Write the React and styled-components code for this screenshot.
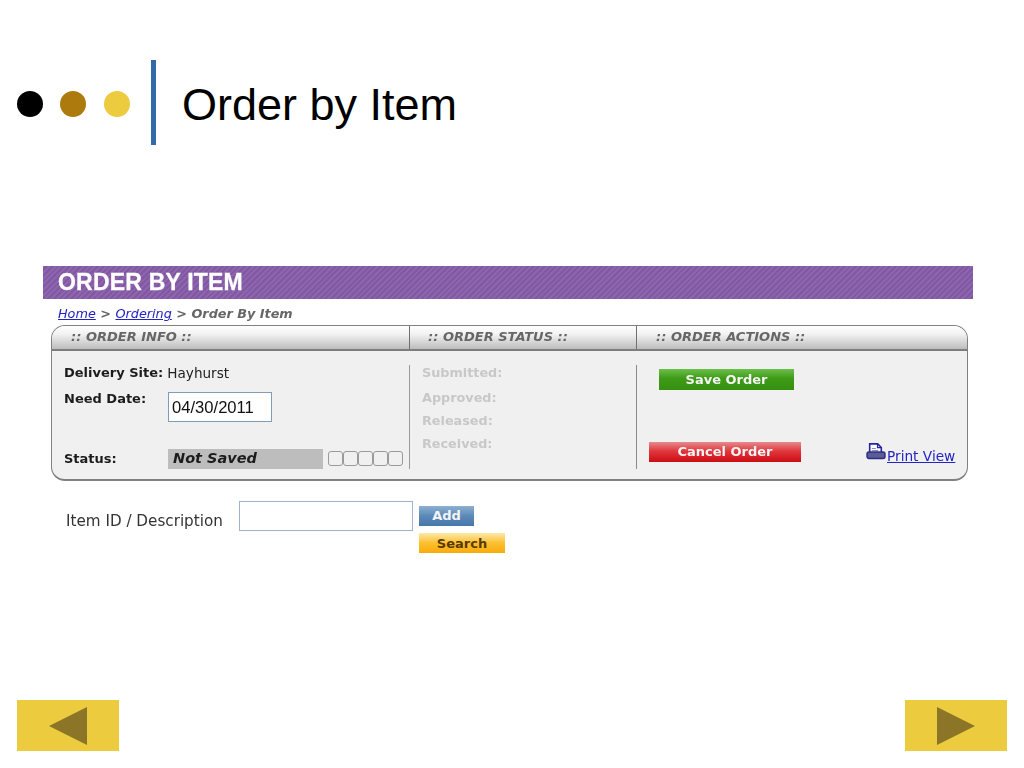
import React from "react";
import styled, { createGlobalStyle } from "styled-components";

const Global = createGlobalStyle`
  html, body { margin: 0; padding: 0; background: #fff; }
  body { font-family: "DejaVu Sans", Verdana, sans-serif; }
`;

const Slide = styled.div`
  width: 1024px;
  height: 768px;
  overflow: hidden;
  display: flex;
  flex-direction: column;
  background: #fff;
`;

const TitleRow = styled.header`
  display: flex;
  align-items: center;
  height: 85px;
  margin-top: 60px;
  padding-left: 17px;
`;

const Dot = styled.span`
  width: 26px;
  height: 26px;
  border-radius: 50%;
  background: ${(p) => p.$color};
  margin-right: ${(p) => p.$gap}px;
  margin-top: 2px;
  flex: none;
`;

const Rule = styled.span`
  width: 5px;
  height: 85px;
  background: #336ba8;
  flex: none;
`;

const SlideTitle = styled.h1`
  margin: 4px 0 0 26px;
  font: 400 45px/1 "Liberation Sans", Arial, sans-serif;
  color: #000;
`;

const Shot = styled.section`
  margin: 121px 51px 0 43px;
  filter: blur(0.4px);
`;

const Banner = styled.div`
  height: 33px;
  padding-left: 15px;
  display: flex;
  align-items: center;
  font: 700 23px/1 "Liberation Sans", Arial, sans-serif;
  letter-spacing: 0.2px;
  -webkit-text-stroke: 0.3px #fff;
  color: #fff;
  background: repeating-linear-gradient(135deg, #8e64ac 0 2px, #8158a3 2px 4px);
`;

const Crumbs = styled.nav`
  height: 26px;
  padding: 8px 0 0 15px;
  box-sizing: border-box;
  font: italic 700 12.8px/14px "DejaVu Sans", Verdana, sans-serif;
  color: #666;
`;

const CrumbLink = styled.a`
  color: #2323c4;
  font-weight: 400;
  text-decoration: underline;
`;

const Panel = styled.div`
  margin: 0 5px 0 8px;
  height: 156px;
  box-sizing: border-box;
  border: 1px solid #808080;
  border-bottom-width: 2px;
  border-radius: 14px;
  background: #f0f0f0;
  overflow: hidden;
  display: flex;
  flex-direction: column;
`;

const PanelHead = styled.div`
  display: grid;
  grid-template-columns: 357px 227px 1fr;
  height: 25px;
  flex: none;
  box-sizing: border-box;
  border-bottom: 2px solid #7d7d7d;
  background: linear-gradient(#ffffff 0%, #f2f2f2 35%, #bdbdbd 100%);
`;

const HeadCell = styled.div`
  padding-left: ${(p) => p.$pad}px;
  font: italic 700 13px/22px "DejaVu Sans", Verdana, sans-serif;
  color: #666;
  border-left: ${(p) => (p.$divided ? "1px solid #707070" : "none")};
`;

const PanelBody = styled.div`
  display: grid;
  grid-template-columns: 357px 227px 1fr;
  flex: 1;
  padding-top: 14px;
`;

const InfoCol = styled.div`
  padding-left: 12px;
  display: flex;
  flex-direction: column;
`;

const InfoRow = styled.div`
  display: flex;
  align-items: ${(p) => p.$align || "center"};
  height: ${(p) => p.$h}px;
  margin-top: ${(p) => p.$mt || 0}px;
  font: 400 13.6px/14px "DejaVu Sans", Verdana, sans-serif;
  color: #222;
  white-space: nowrap;
`;

const Label = styled.b`
  font: 700 13px/14px "DejaVu Sans", Verdana, sans-serif;
  width: ${(p) => (p.$w ? `${p.$w}px` : "auto")};
  flex: none;
  margin-right: ${(p) => p.$mr || 0}px;
  color: #1c1c1c;
`;

const DateInput = styled.input`
  width: 104px;
  height: 30px;
  box-sizing: border-box;
  padding: 2px 0 0 3px;
  border: 1px solid #7f9db9;
  background: #fff;
  font: 400 16.6px "Liberation Sans", Arial, sans-serif;
  color: #111;
  outline: none;
`;

const StatusBar = styled.div`
  width: 155px;
  height: 20px;
  box-sizing: border-box;
  padding-left: 5px;
  background: #bdbdbd;
  font: italic 700 14.5px/19px "DejaVu Sans", Verdana, sans-serif;
  color: #1c1c1c;
`;

const Steps = styled.div`
  display: flex;
  margin: -2px 0 0 5px;
`;

const Step = styled.span`
  width: 15px;
  height: 15px;
  box-sizing: border-box;
  border: 1px solid #9a9a9a;
  border-radius: 3px;
`;

const StatusCol = styled.div`
  border-left: 1px solid #9a9a9a;
  height: 104px;
  box-sizing: border-box;
  padding: 1px 0 0 12px;
  display: flex;
  flex-direction: column;
`;

const Muted = styled.b`
  font: 700 12.8px/14px "DejaVu Sans", Verdana, sans-serif;
  color: #c8c8c8;
  height: ${(p) => p.$h}px;
  display: block;
`;

const ActionCol = styled.div`
  border-left: 1px solid #8a8a8a;
  height: 104px;
  box-sizing: border-box;
  display: flex;
  flex-direction: column;
  padding-top: 4px;
`;

const GelButton = styled.button`
  display: block;
  width: ${(p) => p.$w}px;
  height: ${(p) => p.$h || 21}px;
  margin-left: ${(p) => p.$ml || 0}px;
  padding: ${(p) => p.$pt || 0}px 0 0;
  border: 0;
  background: ${(p) => p.$bg};
  color: ${(p) => p.$fg || "#f4f4f4"};
  font: 700 13px/${(p) => p.$h || 21}px "DejaVu Sans", Verdana, sans-serif;
  text-align: center;
  box-sizing: border-box;
  flex: none;
`;

const ActionFoot = styled.div`
  display: flex;
  align-items: flex-end;
  margin-top: 52px;
  padding-left: 12px;
`;

const PrintLink = styled.a`
  display: flex;
  align-items: flex-end;
  margin-left: 65px;
  font: 400 13.7px/13px "DejaVu Sans", Verdana, sans-serif;
  color: #2323c4;
  white-space: nowrap;
  position: relative;
  top: 1px;
`;

const PrintText = styled.span`
  text-decoration: underline;
  margin-left: 1px;
`;

const PrintIcon = styled.svg`
  display: block;
  margin-bottom: 3px;
  flex: none;
`;

const ItemRow = styled.div`
  display: flex;
  align-items: flex-start;
  margin: 20px 0 0 23px;
`;

const ItemLabel = styled.label`
  width: 173px;
  flex: none;
  font: 400 15.2px/16px "DejaVu Sans", Verdana, sans-serif;
  color: #333;
  padding-top: 12px;
  white-space: nowrap;
`;

const ItemInput = styled.input`
  width: 174px;
  height: 30px;
  box-sizing: border-box;
  border: 1px solid #9fb3cc;
  background: #fff;
  outline: none;
`;

const ItemButtons = styled.div`
  display: flex;
  flex-direction: column;
  align-items: flex-start;
  gap: 7px;
  margin: 5px 0 0 6px;
`;

const Footer = styled.footer`
  margin-top: auto;
  padding: 0 17px 17px;
  display: flex;
  justify-content: space-between;
`;

const NavBox = styled.button`
  width: 102px;
  height: 51px;
  padding: 0;
  border: 0;
  background: #eccb3f;
  display: flex;
  align-items: center;
  justify-content: center;
`;

const Printer = () => (
  <PrintIcon width="20" height="17" viewBox="0 0 20 17">
    <path d="M3.7 9V.9h8l3.6 3.6V9" fill="#fff" stroke="#25259c" strokeWidth="1.6" />
    <path d="M11.5 1v3.6h3.6" fill="none" stroke="#25259c" strokeWidth="1.2" />
    <path d="M5.8 5.5h4M5.8 7.5h6.5" stroke="#8a8ac8" strokeWidth="1" />
    <rect x="1" y="9" width="18" height="6.5" rx="2" fill="#5b5b96" stroke="#2c2c86" strokeWidth="1.4" />
  </PrintIcon>
);

const Arrow = ({ dir }) => (
  <svg width="38" height="38" viewBox="0 0 38 38">
    <polygon points={dir === "left" ? "38,0 38,38 0,19" : "0,0 0,38 38,19"} fill="#8c7527" />
  </svg>
);

export default function App() {
  return (
    <Slide>
      <Global />
      <TitleRow>
        <Dot $color="#000" $gap={17} />
        <Dot $color="#ad7a0e" $gap={18} />
        <Dot $color="#eccb3f" $gap={21} />
        <Rule />
        <SlideTitle>Order by Item</SlideTitle>
      </TitleRow>
      <Shot>
        <Banner>ORDER BY ITEM</Banner>
        <Crumbs>
          <CrumbLink>Home</CrumbLink> &gt; <CrumbLink>Ordering</CrumbLink> &gt; Order By Item
        </Crumbs>
        <Panel>
          <PanelHead>
            <HeadCell $pad={19}>:: ORDER INFO ::</HeadCell>
            <HeadCell $pad={18} $divided>:: ORDER STATUS ::</HeadCell>
            <HeadCell $pad={19} $divided>:: ORDER ACTIONS ::</HeadCell>
          </PanelHead>
          <PanelBody>
            <InfoCol>
              <InfoRow $h={16}>
                <Label $mr={4}>Delivery Site:</Label>Hayhurst
              </InfoRow>
              <InfoRow $h={30} $mt={11} $align="flex-start">
                <Label $w={104}>Need Date:</Label>
                <DateInput readOnly value="04/30/2011" />
              </InfoRow>
              <InfoRow $h={20} $mt={27}>
                <Label $w={104}>Status:</Label>
                <StatusBar>Not Saved</StatusBar>
                <Steps>
                  <Step /><Step /><Step /><Step /><Step />
                </Steps>
              </InfoRow>
            </InfoCol>
            <StatusCol>
              <Muted $h={25}>Submitted:</Muted>
              <Muted $h={23}>Approved:</Muted>
              <Muted $h={23}>Released:</Muted>
              <Muted $h={23}>Received:</Muted>
            </StatusCol>
            <ActionCol>
              <GelButton
                $w={135}
                $ml={22}
                $bg="linear-gradient(#6ac04a, #3f9a17 45%, #34900f)"
              >
                Save Order
              </GelButton>
              <ActionFoot>
                <GelButton
                  $w={152}
                  $h={20}
                  $bg="linear-gradient(#e58a8e, #e0383e 45%, #cc0c12)"
                >
                  Cancel Order
                </GelButton>
                <PrintLink>
                  <Printer />
                  <PrintText>Print View</PrintText>
                </PrintLink>
              </ActionFoot>
            </ActionCol>
          </PanelBody>
        </Panel>
        <ItemRow>
          <ItemLabel>Item ID / Description</ItemLabel>
          <ItemInput />
          <ItemButtons>
            <GelButton $w={55} $h={20} $bg="linear-gradient(#8fb0d2, #5a8ab8 50%, #4677a8)">
              Add
            </GelButton>
            <GelButton
              $w={86}
              $h={20}
              $pt={1}
              $fg="#5a3a00"
              $bg="linear-gradient(#fde9a8, #fcc031 50%, #f8ab0a)"
            >
              Search
            </GelButton>
          </ItemButtons>
        </ItemRow>
      </Shot>
      <Footer>
        <NavBox aria-label="Previous"><Arrow dir="left" /></NavBox>
        <NavBox aria-label="Next"><Arrow dir="right" /></NavBox>
      </Footer>
    </Slide>
  );
}
